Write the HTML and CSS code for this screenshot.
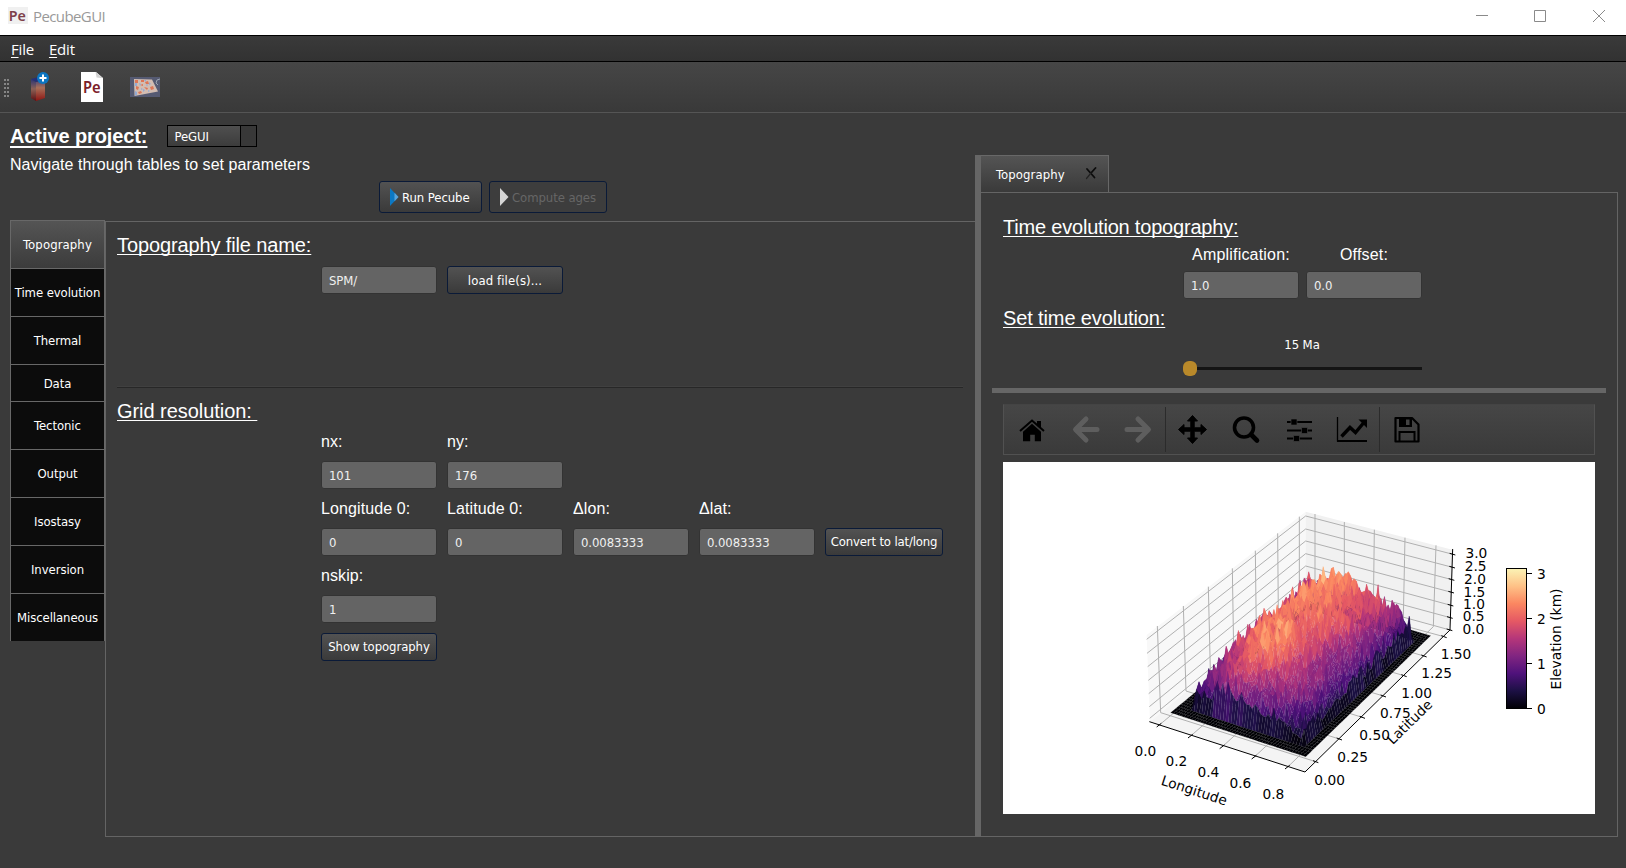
FILE: index.html
```html
<!DOCTYPE html>
<html lang="en">
<head>
<meta charset="utf-8">
<title>PecubeGUI</title>
<link rel="stylesheet" href="styles.css">
</head>
<body>
<div class="titlebar">
  <svg class="app-icon" width="20" height="17" viewBox="0 0 20 17"><rect width="20" height="17" fill="#f0f0f0"/><text x="0.8" y="13.8" font-family="Noto Sans" font-weight="600" font-size="14.5" textLength="17" lengthAdjust="spacingAndGlyphs" fill="#7d4049">Pe</text></svg>
  <span class="title">PecubeGUI</span>
  <svg class="win-controls" width="130" height="14" viewBox="0 0 130 14" fill="none" stroke="#8a8a8a">
    <path d="M0 6.500H12M58.500 1.500h11v11h-11zM117 1l12 12M129 1l-12 12"/>
  </svg>
</div>
<div class="menubar"><span><u>F</u>ile</span><span><u>E</u>dit</span></div>
<div class="toolbar">
  <svg class="grip" width="6" height="18" viewBox="0 0 6 18" fill="#858585"><path d="M0 0h2v2H0zM3 0h2v2H3zM0 4h2v2H0zM3 4h2v2H3zM0 8h2v2H0zM3 8h2v2H3zM0 12h2v2H0zM3 12h2v2H3zM0 16h2v2H0zM3 16h2v2H3z"/></svg>
  <svg class="tool-new" width="20" height="30" viewBox="0 0 20 30">
    <defs>
      <linearGradient id="boxL" x2="0" y2="1"><stop offset="0" stop-color="#2a3376"/><stop offset=".45" stop-color="#8b6156"/><stop offset="1" stop-color="#5c0f12"/></linearGradient>
      <linearGradient id="boxR" x2="0" y2="1"><stop offset="0" stop-color="#39407c"/><stop offset=".4" stop-color="#a96f58"/><stop offset="1" stop-color="#8c1412"/></linearGradient>
    </defs>
    <path d="M1 7l5 3v19l-5-3z" fill="url(#boxL)"/><path d="M6 10l9-3v19l-9 3z" fill="url(#boxR)"/><path d="M1 7l8-2 6 2-9 3z" fill="#252f78"/>
    <circle cx="13" cy="6" r="6" fill="#0c76c2"/><path d="M13 2.500v7M9.500 6h7" stroke="#fff" stroke-width="2"/>
  </svg>
  <svg class="tool-doc" width="22" height="30" viewBox="0 0 22 30"><path d="M0 0h15l7 6v24H0z" fill="#fff"/><path d="M14.500 0l1 5.500 6.500.7z" fill="#d2d2d2"/><text x="2" y="20.500" font-family="Noto Sans" font-weight="600" font-size="16" textLength="17.500" lengthAdjust="spacingAndGlyphs" fill="#7c2028">Pe</text></svg>
  <svg class="tool-map" width="30" height="20" viewBox="0 0 30 20"><rect width="30" height="20" fill="#555a72"/><path d="M4 2l18 .5 6 12L4.500 19z" fill="#d3bdb2"/>
    <path d="M5 3h3v3H5zM11 3h3v2h-3zM15 5l3-1 1 3h-3zM6 9l3 1-1 3-2-1zM10 8l3-1v2zM14 10l4 1-1 2zM8 15l3-1 1 2-3 1zM20 10l3-1 1 3-3 1z" fill="#de7757"/>
    <path d="M9 6l2 1-1 2zM13 12l2 1-2 2zM5 14l2 1v3l-2 .5zM19 5l2 2-2 1zM14 3h2v2zM11 11l2 1-2 1zM18 13l2 1-2 1zM5 6h2v3H5zM16 7.500h2l-1 2z" fill="#93aad4"/><path d="M30 2l-3 1-1 3 2 2" fill="none" stroke="#9ba4b1"/></svg>
</div>
<main class="workspace">
  <section class="left">
    <div class="project-row"><h1>Active project:</h1><div class="combo"><span>PeGUI</span><i></i></div></div>
    <p class="hint">Navigate through tables to set parameters</p>
    <div class="run-row">
      <button class="btn run"><svg width="9" height="18" viewBox="0 0 9 18"><path d="M0 0l8.500 9L0 18z" fill="#0c78c4"/><path d="M4.500 4.800L8.500 9l-4 4.200z" fill="#5aa3db"/></svg><span>Run Pecube</span></button>
      <button class="btn compute" disabled><svg width="9" height="18" viewBox="0 0 9 18"><path d="M0 0l8.500 9L0 18z" fill="#d6d6d6"/></svg><span>Compute ages</span></button>
    </div>
    <div class="tabbed">
      <nav class="side-tabs">
        <div class="side-tab active">Topography</div><div class="side-tab">Time evolution</div><div class="side-tab">Thermal</div><div class="side-tab short">Data</div><div class="side-tab">Tectonic</div><div class="side-tab">Output</div><div class="side-tab">Isostasy</div><div class="side-tab">Inversion</div><div class="side-tab">Miscellaneous</div>
      </nav>
      <div class="pane">
        <h2 class="h-file">Topography file name:</h2>
        <div class="file-row"><div class="field">SPM/</div><button class="btn load">load file(s)...</button></div>
        <hr>
        <h2 class="h-grid">Grid resolution:&nbsp;</h2>
        <div class="grid-form">
          <label class="first">nx:</label><label class="first wide">ny:</label>
          <div class="field">101</div><div class="field wide">176</div>
          <label>Longitude 0:</label><label>Latitude 0:</label><label>Δlon:</label><label class="to-end">Δlat:</label>
          <div class="field">0</div><div class="field">0</div><div class="field">0.0083333</div><div class="field">0.0083333</div><button class="btn convert">Convert to lat/long</button>
          <label class="full">nskip:</label>
          <div class="field full">1</div>
          <button class="btn show">Show topography</button>
        </div>
      </div>
    </div>
  </section>
  <div class="splitter"></div>
  <section class="right">
    <div class="dock-tab"><span>Topography</span><svg width="14" height="14" viewBox="0 0 14 14" fill="none" stroke="#0c0c0c" stroke-linecap="round"><path d="M3 2l7.500 8.500" stroke-width="1.800"/><path d="M11.500 1L7 6" stroke-width="1.800"/><path d="M7 6l-4.500 5.500" stroke="#222" stroke-width="1.200"/></svg></div>
    <div class="dock-pane">
      <h2 class="h-evo">Time evolution topography:</h2>
      <div class="evo-form"><label>Amplification:</label><label>Offset:</label><div class="field">1.0</div><div class="field">0.0</div></div>
      <h2 class="h-set">Set time evolution:</h2>
      <div class="age">15 Ma</div>
      <div class="slider"><div class="knob"></div><div class="track"></div></div>
      <div class="h-split"></div>
      <div class="plot-tools">
        <svg viewBox="3 1 53 50"><path d="M17 26.500L29 16l12 10.500" transform="translate(0 .5)" fill="none" stroke="#000" stroke-width="2"/><path d="M29 19.500l9 8V37h-6.200v-6.500h-4.600V37H20v-9.500z" transform="translate(0 .2)"/><path d="M34 17h4v8l-4-3.500z"/></svg>
        <svg viewBox="4 1 53 50" class="dim"><path d="M42 25.500H22M31 15L20.500 25.500 31 36"/></svg>
        <svg viewBox="2 1 53 50" class="dim"><path d="M17 25.500h20M28 15l10.500 10.500L28 36"/></svg>
        <i class="sep"></i>
        <svg viewBox="2 1 53 50"><path d="M27.500 11.500l5 5.500h-3.300v6.800H36V20.500l5.500 5-5.500 5v-3.300h-6.800V34h3.300l-5 5.500-5-5.500h3.300v-6.800H19v3.300l-5.500-5 5.500-5v3.300h6.800V17h-3.300z" stroke="#000" stroke-linejoin="round"/></svg>
        <svg viewBox="2 1 53 50"><circle cx="26" cy="23.500" r="9.500" fill="none" stroke="#000" stroke-width="3.600"/><path d="M33 30.500l6 6" stroke="#000" stroke-width="4.600" stroke-linecap="round"/></svg>
        <svg viewBox="2 1 53 50"><path d="M16 18h25M16 26.500h25M16 34.500h25" stroke="#000" stroke-width="1.800"/><path d="M20 15h6v6h-6zM30.500 23.500h6v6h-6zM22.500 31.500h6v6h-6z" stroke="#444" stroke-width=".6"/></svg>
        <svg viewBox="2 1 53 50"><path d="M13.500 13v24.500" fill="none" stroke="#000" stroke-width="1.300"/><path d="M13 36h30v2H13z"/><path d="M17.500 32.500l8.500-9 5.500 5L39.500 19" fill="none" stroke="#000" stroke-width="3.400"/><path d="M34.500 15.500H43V24z"/></svg>
        <i class="sep"></i>
        <svg viewBox="1 1 53 50"><path d="M15.500 14h16.500l6.500 6.500V37.500h-23z" fill="none" stroke="#000" stroke-width="2.200" stroke-linejoin="round"/><path d="M19 14h13v9H19z"/><path d="M26 15.500h3.500v5.500H26z" fill="#424242"/><path d="M19.500 37.500v-9.500h15v9.500" fill="none" stroke="#000" stroke-width="2"/></svg>
      </div>
      <svg class="plot" viewBox="0 0 592 352">
        <defs><linearGradient id="magma" x1="0" y1="1" x2="0" y2="0"><stop offset="0" stop-color="#000004"/><stop offset=".125" stop-color="#1c1044"/><stop offset=".25" stop-color="#4f127b"/><stop offset=".375" stop-color="#812581"/><stop offset=".5" stop-color="#b5367a"/><stop offset=".625" stop-color="#e55964"/><stop offset=".75" stop-color="#fb8761"/><stop offset=".875" stop-color="#fec287"/><stop offset="1" stop-color="#fbf3b5"/></linearGradient></defs>
        <g transform="translate(117 28) scale(.33333)">
          <path d="M80 435L557 65V308L90 695z" fill="#f8f8f8"/>
          <path d="M557 65L1000 180 990 420 557 308z" fill="#f1f1f1"/>
          <path d="M90 695L557 308 990 420 555 846z" fill="#f4f4f4"/>
          <g fill="none" stroke="#b0b0b0" stroke-width="3">
            <path d="M80 448L557 78 999 193M81 490L557 117 998 232M83 530L557 153 996 269M85 571L557 191 995 307M86 611L557 228 993 346M88 650L557 265 991 383M89 685L557 301 990 420"/>
            <path d="M112 408L122 668 587 815M190 348L198 603 658 747M265 290L271 541 727 682M337 235L341 483 790 618M406 182L409 427 852 557M473 130L475 373 912 498M538 80V322L972 440"/>
            <path d="M585 72V316L118 705M673 96V337L212 738M763 119L760 360 307 770M855 143L850 384 403 801M948 166L940 410 503 831"/>
          </g>
          <g id="surface"></g>
          <g fill="none" stroke="#000" stroke-width="3">
            <path d="M88 695L555 846 990 420 998 177"/>
            <path d="M124 700L110 711M218 733L204 744M313 765L299 776M409 796L395 807M509 826L495 837M579 812L595 818M650 744L666 750M719 679L735 685M782 615L798 621M844 554L860 560M904 495L920 501M964 437L980 443"/>
            <path d="M989 190L1006 195M988 229L1005 234M986 266L1003 271M985 304L1002 309M983 343L1000 348M981 380L998 385M980 417L997 422"/>
          </g>
          <g class="ticks">
            <text x="76" y="798">0.0</text><text x="169" y="828">0.2</text><text x="265" y="861">0.4</text><text x="361" y="894">0.6</text><text x="460" y="927">0.8</text>
            <text x="629" y="885">0.00</text><text x="698" y="817">0.25</text><text x="764" y="751">0.50</text><text x="826" y="685">0.75</text><text x="890" y="625">1.00</text><text x="950" y="564">1.25</text><text x="1008" y="508">1.50</text>
            <text x="1069" y="205">3.0</text><text x="1067" y="243">2.5</text><text x="1065" y="283">2.0</text><text x="1063" y="321">1.5</text><text x="1062" y="357">1.0</text><text x="1061" y="394">0.5</text><text x="1060" y="433">0.0</text>
            <text transform="translate(218 915) rotate(18)">Longitude</text>
            <text transform="translate(879 706) rotate(-44.500)">Latitude</text>
          </g>
        </g>
        <rect x="503.500" y="106.500" width="20" height="140" fill="url(#magma)" stroke="#000"/>
        <path d="M524 111.500h5M524 156.500h5M524 201.500h5M524 246.500h5" stroke="#000"/>
        <g class="cb"><text x="534" y="116.500">3</text><text x="534" y="161.500">2</text><text x="534" y="206.500">1</text><text x="534" y="251.500">0</text><text transform="translate(558 177) rotate(-90)" text-anchor="middle" textLength="101">Elevation (km)</text></g>
      </svg>
    </div>
  </section>
</main>
<script src="surface.js"></script>
</body>
</html>
```
FILE: surface.js
```js
// Draws the elevation surface as depth-sorted quads inside the plot's #surface group.
(function () {
  var NU = 50, NV = 60, KM = 76, MAXZ = 3.12;
  var stops = [[0, 0, 4], [28, 16, 68], [79, 18, 123], [129, 37, 129], [181, 54, 122], [229, 89, 100], [251, 135, 97], [254, 194, 135], [252, 253, 191]];
  var seed = 20817;
  function rnd() { seed = (seed * 1664525 + 1013904223) >>> 0; return seed / 4294967296; }

  function color(z) {
    var t = Math.max(0, Math.min(0.999, z / MAXZ)) * 8, i = Math.floor(t), f = t - i;
    return 'rgb(' + [0, 1, 2].map(function (k) { return Math.round(stops[i][k] + (stops[i + 1][k] - stops[i][k]) * f); }).join(',') + ')';
  }

  // Unit square to the floor quadrilateral: left, front, right, back corners.
  var P = [[152, 668], [557, 800], [932, 437], [562, 330]];
  var dx1 = P[1][0] - P[2][0], dx2 = P[3][0] - P[2][0], sx = P[0][0] - P[1][0] + P[2][0] - P[3][0];
  var dy1 = P[1][1] - P[2][1], dy2 = P[3][1] - P[2][1], sy = P[0][1] - P[1][1] + P[2][1] - P[3][1];
  var det = dx1 * dy2 - dx2 * dy1, g = (sx * dy2 - dx2 * sy) / det, h = (dx1 * sy - sx * dy1) / det;
  var a = P[1][0] - P[0][0] + g * P[1][0], b = P[3][0] - P[0][0] + h * P[3][0];
  var d = P[1][1] - P[0][1] + g * P[1][1], e = P[3][1] - P[0][1] + h * P[3][1];
  function project(u, v, z) {
    var w = g * u + h * v + 1;
    return ((a * u + b * v + P[0][0]) / w).toFixed(1) + ',' + ((d * u + e * v + P[0][1]) / w - z * KM).toFixed(1);
  }

  function height(u, v) {
    var s = (u - 0.1) / 0.83, t = (v - 0.055) / 0.865;
    if (s < 0 || s > 1 || t < 0 || t > 1) return 0;
    var across = s < 0.4 ? 0.25 + 0.75 * Math.pow(Math.sin(Math.PI / 2 * s / 0.4), 0.7) : 0.1 + 0.9 * Math.pow((1 - s) / 0.6, 0.68 - 0.38 * t * t);
    var along = (0.24 + 0.76 * Math.pow(Math.min(1, t / 0.22), 0.52)) * (0.3 + 0.7 * Math.pow(Math.min(1, (1 - t) / 0.1), 0.6));
    var swell = 0.97 + 0.04 * Math.sin(t * 17 + s * 6) + 0.05 * Math.sin(t * 9 - s * 15);
    var spike = rnd();
    return 2.2 * across * along * swell * (0.74 + 0.32 * rnd()) + 0.7 * spike * spike;
  }

  var z = [], i, j, out = [];
  for (i = 0; i <= NU; i++) { z.push([]); for (j = 0; j <= NV; j++) z[i].push(height(i / NU, j / NV)); }
  for (j = NV - 1; j >= 0; j--) {
    for (i = 0; i < NU; i++) {
      var q = [[i, j], [i + 1, j], [i + 1, j + 1], [i, j + 1]];
      var mean = (z[i][j] + z[i + 1][j] + z[i + 1][j + 1] + z[i][j + 1]) / 4;
      var c = color(mean * 1.09 - 0.06);
      out.push('<polygon fill="' + c + '" stroke="' + c + '" points="' + q.map(function (p) { return project(p[0] / NU, p[1] / NV, z[p[0]][p[1]]); }).join(' ') + '"/>');
    }
  }
  document.getElementById('surface').innerHTML = out.join('');
})();
```
FILE: styles.css
```css
* { box-sizing: border-box; }
body { margin: 0; width: 1626px; height: 868px; overflow: hidden; background: #3a3a3a; color: #fff; font: 13px/16px "DejaVu Sans Condensed", "DejaVu Sans", sans-serif; font-stretch: condensed; letter-spacing: -.08px; }
h1, h2, p { margin: 0; }
h1 { font: bold 20px/24px "Liberation Sans", Arial, sans-serif; text-decoration: underline; text-decoration-thickness: 2px; text-underline-offset: 3px; text-decoration-skip-ink: none; letter-spacing: -.1px; }
h2 { font: 20px/24px "Liberation Sans", Arial, sans-serif; text-decoration: underline; text-decoration-thickness: 1px; text-underline-offset: 2px; text-decoration-skip-ink: none; letter-spacing: -.12px; }
label, .hint { font: 16px/20px "Liberation Sans", Arial, sans-serif; letter-spacing: .1px; }

.titlebar { display: flex; align-items: center; height: 35px; padding: 0 20px 4px 8px; background: #fff; color: #999; font: 15px/20px "Open Sans", sans-serif; }
.app-icon { overflow: visible; }
.title { margin-left: 5px; letter-spacing: -.6px; }
.win-controls { margin-left: auto; }
.menubar { display: flex; gap: 15px; height: 27px; padding: 3px 11px; border: solid #000; border-width: 1px 0; background: linear-gradient(#3a3a3a, #323232); font: 15px/21px "Open Sans", sans-serif; letter-spacing: -.2px; }
.menubar u { text-underline-offset: 2px; }
.toolbar { display: flex; align-items: flex-start; height: 51px; padding: 10px 4px; border-bottom: 1px solid #555; background: linear-gradient(#464646, #393939); }
.grip { margin-top: 7px; }
.tool-new { margin-left: 20px; }
.tool-doc { margin-left: 31px; }
.tool-map { margin: 5px 0 0 27px; }

.workspace { display: flex; height: 755px; padding-top: 9px; }
.left { width: 975px; padding-left: 10px; }
.project-row { display: flex; align-items: center; height: 28px; }
.combo { display: flex; width: 90px; height: 22px; margin-left: 20px; border: 1px solid #000; background: #383838; line-height: 21px; }
.combo span { width: 73px; padding-left: 6px; border-right: 1px solid #000; background: linear-gradient(#4f4f4f, #3c3c3c); }
.hint { margin-top: 5px; height: 20px; letter-spacing: .05px; }
.run-row { display: flex; gap: 7px; margin-left: 369px; padding-top: 6px; height: 45px; }
.btn { display: flex; align-items: center; justify-content: center; width: 116px; height: 28px; margin: 0; padding: 0; border: 1px solid #0a1a38; border-radius: 3px; background: linear-gradient(#525252, #3a3a3a); color: #fff; font: inherit; letter-spacing: inherit; white-space: nowrap; }
.btn.run { width: 103px; height: 32px; gap: 3px; }
.btn.compute { width: 118px; height: 32px; gap: 3px; background: #3d3d3d; color: #666; }
.btn.load { padding-top: 1px; letter-spacing: .1px; }
.run-row .btn { justify-content: flex-start; padding-left: 10px; }
.run-row span { padding-top: 1px; }
.tabbed { display: flex; height: 617px; }
.side-tabs { width: 95px; }
.side-tab { display: flex; align-items: center; justify-content: center; height: 48px; border-left: 1px solid #686868; border-right: 1px solid #686868; border-bottom: 1px solid #686868; background: #0c0c0c; white-space: nowrap; }
.side-tab.active { height: 49px; border-top: 1px solid #686868; background: linear-gradient(#545454, #3c3c3c); letter-spacing: .1px; }
.side-tab.short { height: 37px; padding-top: 1px; }
.side-tab:last-child { height: 47px; border-bottom: 0; }
.pane { width: 870px; height: 616px; margin-top: 1px; padding-left: 11px; border: solid #646464; border-width: 1px 0 1px 1px; }
.h-file { margin-top: 11px; }
.file-row { display: flex; gap: 10px; margin: 9px 0 0 204px; }
.field { width: 116px; height: 28px; padding-left: 7px; border: 1px solid #333; border-radius: 3px; background: #646464; color: #f0f0f0; line-height: 27px; }
hr { width: 846px; height: 2px; margin: 92px 0 0; border: solid; border-width: 1px 0; border-color: #404040 transparent #272727; }
.h-grid { margin-top: 11px; width: max-content; letter-spacing: -.05px; }
.grid-form { display: grid; grid-template-columns: 116px 116px 116px 116px 118px; grid-template-rows: 30px 28px 39px 28px 39px 28px 38px; column-gap: 10px; align-items: center; margin: 8px 0 0 204px; }
.first { align-self: start; margin-top: 1px; }
.wide { grid-column: 2 / -1; }
.to-end { grid-column: 4 / -1; }
.full { grid-column: 1 / -1; }
.convert { width: 118px; letter-spacing: -.15px; }
.show { margin-top: 9px; }

.splitter { width: 6px; height: 682px; margin-top: 33px; background: #666; }
.right { width: 637px; padding-top: 33px; }
.dock-tab { display: flex; justify-content: space-between; align-items: center; width: 128px; height: 37px; padding: 2px 10px 0 15px; border: solid #686868; border-width: 1px 1px 0 0; background: linear-gradient(#545454, #3a3a3a); letter-spacing: .1px; }
.dock-tab svg { margin-top: -3px; }
.dock-pane { height: 645px; padding: 22px 0 0 22px; border: solid #646464; border-width: 1px 1px 1px 0; }
.h-evo { letter-spacing: -.2px; }
.evo-form { display: grid; grid-template-columns: 116px 116px; grid-template-rows: 20px 28px; gap: 6px 7px; margin: 6px 0 0 180px; }
.evo-form label { text-align: center; letter-spacing: .2px; }
.h-set { margin-top: 7px; }
.age { width: 238px; margin: 7px 0 0 180px; text-align: center; }
.slider { display: flex; align-items: center; width: 239px; height: 15px; margin: 8px 0 0 180px; }
.knob { width: 14px; height: 15px; border-radius: 6px; background: #b9892a; }
.track { flex: 1; height: 3px; background: #141414; }
.h-split { width: 614px; height: 5px; margin: 12px 0 11px -11px; background: #666; }
.plot-tools { display: flex; align-items: center; width: 592px; height: 51px; padding-left: 1.5px; border: 1px solid #515151; border-top-color: #444; background: linear-gradient(#464646, #3a3a3a); }
.plot-tools svg { width: 53px; height: 50px; flex: none; }
.plot-tools .dim path { fill: none; stroke: #5e5e5e; stroke-width: 5; stroke-linecap: round; stroke-linejoin: round; }
.sep { width: 2px; height: 45px; border-left: 1px solid #2b2b2b; }
.plot { display: block; width: 592px; height: 352px; margin-top: 7px; background: #fff; }
#surface { stroke-width: .4; stroke-linejoin: round; }
.ticks, .cb { font-family: "DejaVu Sans", sans-serif; font-stretch: normal; letter-spacing: 0; fill: #000; }
.ticks { font-size: 41.3px; text-anchor: middle; }
.cb { font-size: 13.8px; }
```
